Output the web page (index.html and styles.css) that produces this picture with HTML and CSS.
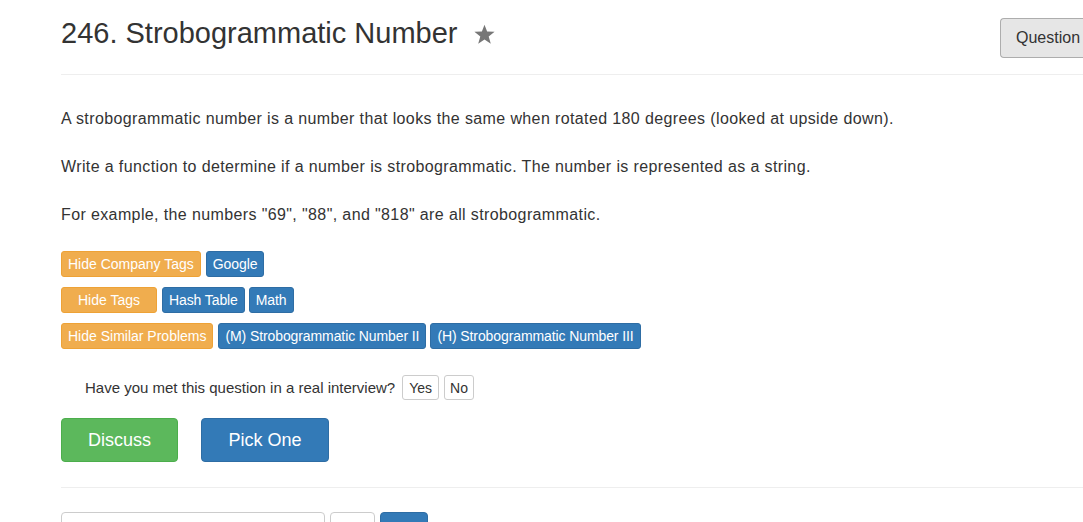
FILE: index.html
```html
<!DOCTYPE html>
<html>
<head>
<meta charset="utf-8">
<title>246. Strobogrammatic Number</title>
<link rel="stylesheet" href="styles.css">
</head>
<body>
<div class="page">
  <div class="header">
    <h1 class="title">246. Strobogrammatic Number<svg class="star" width="21" height="21" viewBox="0 0 20 20"><path d="M10 0.6 L12.5 7.2 L19.6 7.4 L14 11.8 L16 18.8 L10 14.7 L4 18.8 L6 11.8 L0.4 7.4 L7.5 7.2 Z" fill="#777"/></svg></h1>
    <button class="btn-question">Question</button>
  </div>
  <hr class="rule rule-top">
  <div class="desc">
    <p>A strobogrammatic number is a number that looks the same when rotated 180 degrees (looked at upside down).</p>
    <p>Write a function to determine if a number is strobogrammatic. The number is represented as a string.</p>
    <p>For example, the numbers "69", "88", and "818" are all strobogrammatic.</p>
  </div>
  <div class="tags">
    <div class="tag-row">
      <span class="label label-warning">Hide Company Tags</span>
      <span class="label label-primary">Google</span>
    </div>
    <div class="tag-row">
      <span class="label label-warning wide">Hide Tags</span>
      <span class="label label-primary">Hash Table</span>
      <span class="label label-primary">Math</span>
    </div>
    <div class="tag-row">
      <span class="label label-warning">Hide Similar Problems</span>
      <span class="label label-primary">(M) Strobogrammatic Number II</span>
      <span class="label label-primary">(H) Strobogrammatic Number III</span>
    </div>
  </div>
  <div class="interview">
    <span class="interview-text">Have you met this question in a real interview?</span>
    <button class="btn-small">Yes</button>
    <button class="btn-small">No</button>
  </div>
  <div class="actions">
    <button class="btn-lg btn-success">Discuss</button>
    <button class="btn-lg btn-primary">Pick One</button>
  </div>
  <hr class="rule rule-bottom">
  <div class="bottom">
    <div class="input-box"></div>
    <div class="btn-box"></div>
    <div class="btn-box blue"></div>
  </div>
</div>
</body>
</html>
```
FILE: styles.css
```css
html, body {
  margin: 0;
  padding: 0;
  background: #fff;
  overflow: hidden;
}
body {
  font-family: "Liberation Sans", Arial, sans-serif;
  color: #333;
  font-size: 14px;
}
.page {
  padding-left: 61px;
  width: 1022px;
}
.header {
  display: flex;
  align-items: flex-start;
  padding-top: 17px;
}
.title {
  margin: 0;
  font-size: 29px;
  font-weight: normal;
  line-height: 33px;
  color: #333;
  display: flex;
  align-items: center;
  flex: 1;
}
.star {
  margin-left: 16px;
  margin-top: 2px;
}
.btn-question {
  margin-top: 1px;
  width: 83px;
  height: 40px;
  padding: 0 0 0 15px;
  text-align: left;
  font-family: inherit;
  font-size: 16px;
  color: #333;
  background: #e6e6e6;
  border: 1px solid #adadad;
  border-right: 0;
  border-radius: 4px 0 0 4px;
  white-space: nowrap;
}
.rule {
  border: 0;
  border-top: 1px solid #eee;
  margin: 0;
  height: 0;
}
.rule-top {
  margin-top: 16px;
}
.desc {
  padding-top: 32px;
}
.desc p {
  margin: 0 0 25px 0;
  font-size: 16px;
  line-height: 23px;
  letter-spacing: 0.38px;
}
.tags {
  display: flex;
  flex-direction: column;
  gap: 10px;
}
.tag-row {
  display: flex;
  gap: 4px;
}
.label {
  display: inline-block;
  height: 26px;
  box-sizing: border-box;
  line-height: 24px;
  padding: 0 6px;
  font-size: 14px;
  color: #fff;
  border-radius: 3px;
  white-space: nowrap;
}
.label-warning {
  background: #f0ad4e;
  border: 1px solid #eea236;
  margin-right: 1px;
}
.label-warning.wide {
  padding: 0 16px;
}
.label-primary {
  background: #337ab7;
  border: 1px solid #2e6da4;
  letter-spacing: -0.1px;
}
.interview {
  display: flex;
  align-items: center;
  margin-top: 26px;
  padding-left: 24px;
  height: 25px;
}
.interview-text {
  font-size: 15px;
  margin-right: 7px;
}
.btn-small {
  height: 25px;
  padding: 0 6px;
  margin-right: 5px;
  font-family: inherit;
  font-size: 14px;
  color: #333;
  background: #fff;
  border: 1px solid #ccc;
  border-radius: 3px;
}
.btn-small + .btn-small {
  padding: 0 5px;
}
.actions {
  display: flex;
  gap: 23px;
  margin-top: 18px;
}
.btn-lg {
  height: 44px;
  padding: 0;
  font-family: inherit;
  font-size: 18px;
  color: #fff;
  border-radius: 4px;
}
.btn-success {
  background: #5cb85c;
  border: 1px solid #4cae4c;
  width: 117px;
}
.btn-primary {
  background: #337ab7;
  border: 1px solid #2e6da4;
  width: 128px;
}
.rule-bottom {
  margin-top: 25px;
}
.bottom {
  display: flex;
  gap: 5px;
  margin-top: 24px;
}
.input-box {
  width: 264px;
  height: 34px;
  box-sizing: border-box;
  border: 1px solid #ccc;
  border-radius: 4px;
}
.btn-box {
  width: 45px;
  height: 34px;
  box-sizing: border-box;
  border: 1px solid #ccc;
  border-radius: 4px;
}
.btn-box.blue {
  width: 48px;
  background: #337ab7;
  border-color: #2e6da4;
}
```
